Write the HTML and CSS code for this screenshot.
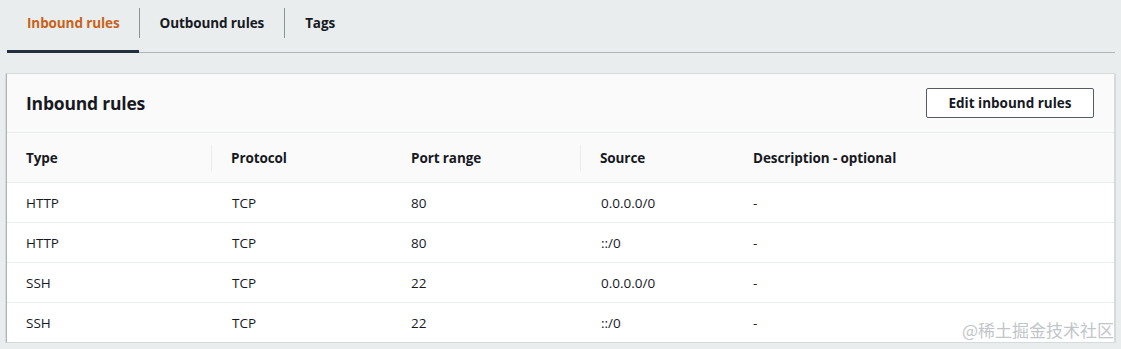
FILE: index.html
```html
<!DOCTYPE html>
<html lang="en">
<head>
    <meta charset="UTF-8">
    <title>Inbound rules</title>
    <link rel="stylesheet" href="styles.css">
</head>
<body>
    <div class="page">
        <div class="tabs">
            <div class="tab tab-active">Inbound rules</div>
            <div class="tab">Outbound rules</div>
            <div class="tab">Tags</div>
        </div>

        <div class="panel">
            <div class="panel-header">
                <h2 class="panel-title">Inbound rules</h2>
                <button class="btn">Edit inbound rules</button>
            </div>
            <table class="rules">
                <thead>
                    <tr>
                        <th class="col-type sep">Type</th>
                        <th class="col-proto">Protocol</th>
                        <th class="col-port sep">Port range</th>
                        <th class="col-source">Source</th>
                        <th>Description - optional</th>
                    </tr>
                </thead>
                <tbody>
                    <tr><td>HTTP</td><td>TCP</td><td>80</td><td>0.0.0.0/0</td><td>-</td></tr>
                    <tr><td>HTTP</td><td>TCP</td><td>80</td><td>::/0</td><td>-</td></tr>
                    <tr><td>SSH</td><td>TCP</td><td>22</td><td>0.0.0.0/0</td><td>-</td></tr>
                    <tr><td>SSH</td><td>TCP</td><td>22</td><td>::/0</td><td>-</td></tr>
                </tbody>
            </table>
            <div class="watermark">@稀土掘金技术社区</div>
        </div>
    </div>
</body>
</html>
```

FILE: styles.css
```css
* {
    margin: 0;
    padding: 0;
    box-sizing: border-box;
}

body {
    background: #eaeded;
    font-family: 'Open Sans', 'Noto Sans', sans-serif;
    font-size: 14px;
    color: #16191f;
}

.page {
    padding: 0 6px 0 6px;
}

/* tabs */
.tabs {
    display: flex;
    height: 53px;
    margin-left: 1px;
    border-bottom: 1px solid #aab7b8;
}

.tab {
    position: relative;
    padding: 0 20px 0 21px;
    height: 52px;
    line-height: 47px;
    font-weight: 700;
    font-size: 13.5px;
    color: #16191f;
    letter-spacing: -0.1px;
}

.tab + .tab::before {
    content: "";
    position: absolute;
    left: 0;
    top: 8px;
    height: 30px;
    border-left: 1px solid #879596;
}

.tab-active {
    padding: 0 19px 0 20px;
    color: #c8621a;
    border-bottom: 3px solid #232f3e;
    height: 53px;
    margin-bottom: -1px;
}

/* panel */
.panel {
    position: relative;
    margin-top: 20px;
    background: #fff;
    border: 1px solid #d5dbdb;
    border-left-color: #aab7b8;
    box-shadow: 0 1px 1px 0 rgba(0, 28, 36, 0.5);
}

.panel-header {
    display: flex;
    align-items: center;
    justify-content: space-between;
    height: 59px;
    padding: 0 20px 0 19px;
    background: #fafafa;
    border-bottom: 1px solid #eaeded;
}

.panel-title {
    font-size: 17.5px;
    font-weight: 700;
    letter-spacing: -0.2px;
}

.btn {
    font-family: inherit;
    font-size: 13.5px;
    font-weight: 700;
    color: #16191f;
    background: #fff;
    border: 1px solid #545b64;
    border-radius: 2px;
    height: 30px;
    width: 168px;
    cursor: pointer;
}

/* table */
.rules {
    width: 100%;
    border-collapse: collapse;
}

.rules th {
    position: relative;
    height: 49px;
    text-align: left;
    font-weight: 700;
    font-size: 13.5px;
    padding: 1px 19px 0;
    background: #fafafa;
    border-bottom: 1px solid #eaeded;
    letter-spacing: -0.1px;
}

.rules th.sep::after {
    content: "";
    position: absolute;
    right: 0;
    top: 12px;
    height: 26px;
    border-right: 1px solid #eaeded;
}

.col-type { width: 205px; }
.col-proto { width: 180px; }
.col-port { width: 189px; }
.col-source { width: 153px; }

.rules td {
    height: 40px;
    padding: 1px 19px 0;
    font-size: 13.5px;
    border-bottom: 1px solid #eaeded;
}

.rules tr:last-child td {
    border-bottom: none;
}

.rules td:nth-child(2),
.rules td:nth-child(4) {
    padding-left: 20px;
}

.watermark {
    position: absolute;
    right: 0;
    bottom: 0;
    font-family: 'Noto Sans CJK SC', sans-serif;
    font-size: 17px;
    color: #b8bcbf;
    opacity: 0.85;
    line-height: 24px;
}
```
